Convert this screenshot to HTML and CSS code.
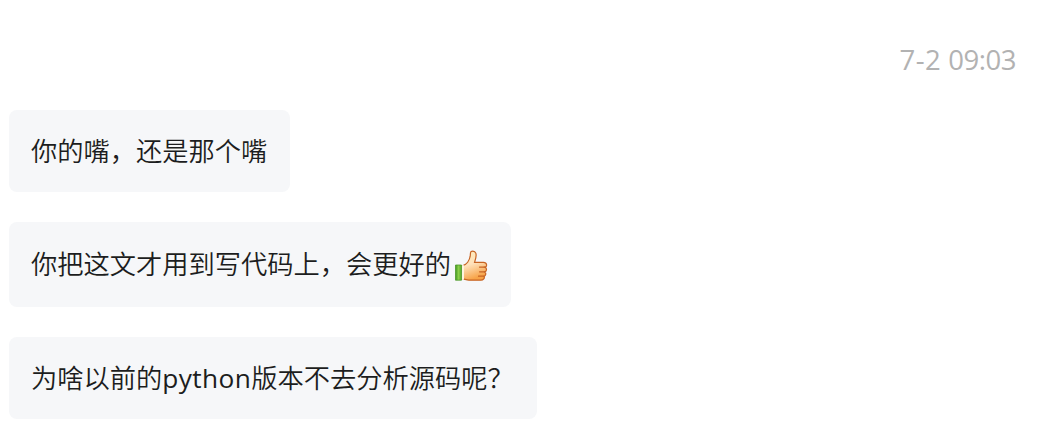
FILE: index.html
```html
<!DOCTYPE html>
<html lang="zh-CN">
<head>
    <meta charset="UTF-8">
    <meta name="viewport" content="width=device-width, initial-scale=1.0">
    <title>聊天记录</title>
    <link rel="stylesheet" href="styles.css">
</head>
<body>
    <div class="chat">
        <div class="time">7<span class="dash">-</span>2 09:03</div>
        <div class="bubble">你的嘴，还是那个嘴</div>
        <div class="bubble has_emoji">
            <span>你把这文才用到写代码上，会更好的</span>
            <svg class="emoji" viewBox="0 0 34 34" role="img" aria-label="赞">
                <defs>
                    <linearGradient id="skin" x1="0" y1="0" x2="0.3" y2="1">
                        <stop offset="0" stop-color="#ffedbd"/>
                        <stop offset="0.5" stop-color="#ffe2bc"/>
                        <stop offset="1" stop-color="#f7a347"/>
                    </linearGradient>
                    <linearGradient id="sleeve" x1="0" y1="0" x2="1" y2="0">
                        <stop offset="0" stop-color="#3f9522"/>
                        <stop offset="0.5" stop-color="#8bcf48"/>
                        <stop offset="1" stop-color="#56a72c"/>
                    </linearGradient>
                </defs>
                <path d="M9 16.5C12.5 15.5 15.5 11.5 16.2 7.2L16.5 3.8C16.7 1.5 20.8 1.4 21.8 4.1C22.8 7 21.6 10.5 20.6 13.3H29.5C33.3 13.3 33.3 17.8 31 18.2C33.2 19.2 32.8 22.3 30.8 22.9C32.4 24.1 31.9 26.8 30 27.3C31 29 29.5 31.2 26.8 31.2H15C12.6 31.2 11 30.2 9 29.8Z" fill="url(#skin)" stroke="#c76424" stroke-width="1.2"/>
                <path d="M31.5 18.1H25.5M31 22.8H25.5M30 27.2H24.5" fill="none" stroke="#c76424" stroke-width="1.2" stroke-linecap="round"/>
                <path d="M7.2 16.2H10V30.7H7.2Z" fill="#fff4df"/>
                <path d="M1.5 16H7.5V31.2H1.5Z" fill="url(#sleeve)" stroke="#4b9829" stroke-width="0.8"/>
            </svg>
        </div>
        <div class="bubble">为啥以前的<span class="latin">python</span>版本不去分析源码呢？</div>
    </div>
</body>
</html>
```
FILE: styles.css
```css
body {
    margin: 0;
    background-color: #ffffff;
    font-family: "Noto Sans", "Noto Sans CJK SC", sans-serif;
}
.chat {
    display: flex;
    flex-direction: column;
    align-items: flex-start;
    gap: 30px;
    padding: 40px 28px 0 9px;
}
.time {
    align-self: flex-end;
    height: 40px;
    line-height: 39px;
    font-family: "Open Sans", "Noto Sans", sans-serif;
    font-size: 27.5px;
    letter-spacing: -0.5px;
    word-spacing: 1.5px;
    color: #b2b2b2;
}
.dash {
    padding: 0 1px;
}
.bubble {
    box-sizing: border-box;
    height: 82px;
    padding: 0 23px 0 22px;
    border-radius: 8px;
    background-color: #f6f7f9;
    color: #1c1d20;
    font-family: "Noto Sans CJK SC", sans-serif;
    font-size: 26.25px;
    font-weight: 350;
    line-height: 80px;
    white-space: nowrap;
}
.has_emoji {
    display: flex;
    align-items: center;
    height: 85px;
    line-height: 83px;
}
.has_emoji span {
    height: 85px;
}
.emoji {
    width: 34px;
    height: 34px;
    margin: 2px 0 0 3px;
}
.latin {
    font-family: "Open Sans", "Noto Sans", sans-serif;
    font-weight: 400;
    letter-spacing: 0.4px;
}
```
